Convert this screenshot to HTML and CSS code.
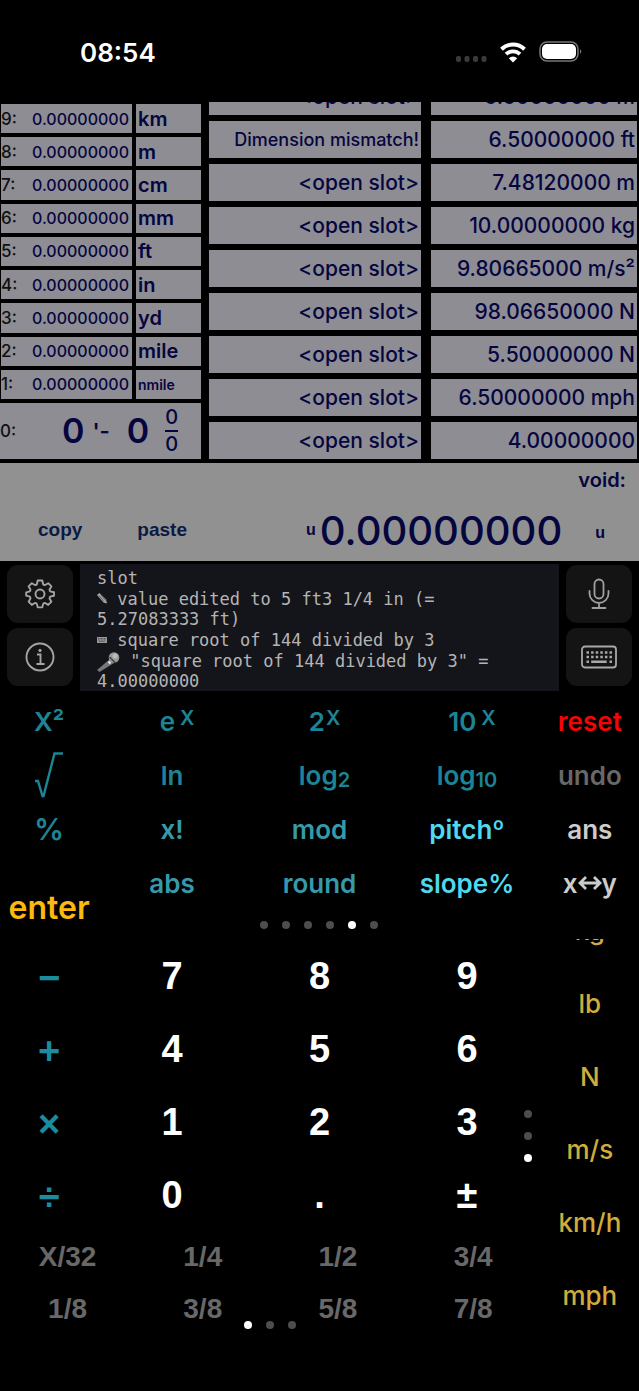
FILE: index.html
```html
<!DOCTYPE html>
<html lang="en">
<head>
<meta charset="utf-8">
<meta name="viewport" content="width=device-width, initial-scale=1">
<title>Calculator</title>
<link rel="stylesheet" href="styles.css">
</head>
<body>
<header class="status">
  <time class="clock">08:54</time>
  <div class="status-icons">
    <svg width="31" height="7" viewBox="0 0 31 7" fill="#3a3a3a"><rect x="0" y="0" width="5" height="6" rx="2"/><rect x="8.500" y="0" width="5" height="6" rx="2"/><rect x="17" y="0" width="5" height="6" rx="2"/><rect x="25.500" y="0" width="5" height="6" rx="2"/></svg>
    <svg class="wifi" width="28" height="22" viewBox="0 0 28 22"><path d="M2.500 8.200a16.500 16.500 0 0 1 23 0" fill="none" stroke="#fff" stroke-width="4"/><path d="M7 13.200a10 10 0 0 1 14 0" fill="none" stroke="#fff" stroke-width="3.800"/><path d="M14 21.500l-4.200-4.300a6 6 0 0 1 8.400 0z" fill="#fff"/></svg>
    <svg width="44" height="22" viewBox="0 0 44 22"><rect x="1" y="1" width="38" height="19" rx="7" fill="none" stroke="#777" stroke-width="1.500"/><rect x="3" y="3" width="34" height="15" rx="5" fill="#fff"/><path d="M41 8q2.600 2.500 0 5z" fill="#777"/></svg>
  </div>
</header>

<main>
<section class="panels">
  <div class="memory">
    <div class="mem-row"><div class="cell mem-value"><span class="mem-id">9:</span><span>0.00000000</span></div><div class="cell unit">km</div></div>
    <div class="mem-row"><div class="cell mem-value"><span class="mem-id">8:</span><span>0.00000000</span></div><div class="cell unit">m</div></div>
    <div class="mem-row"><div class="cell mem-value"><span class="mem-id">7:</span><span>0.00000000</span></div><div class="cell unit">cm</div></div>
    <div class="mem-row"><div class="cell mem-value"><span class="mem-id">6:</span><span>0.00000000</span></div><div class="cell unit">mm</div></div>
    <div class="mem-row"><div class="cell mem-value"><span class="mem-id">5:</span><span>0.00000000</span></div><div class="cell unit">ft</div></div>
    <div class="mem-row"><div class="cell mem-value"><span class="mem-id">4:</span><span>0.00000000</span></div><div class="cell unit">in</div></div>
    <div class="mem-row"><div class="cell mem-value"><span class="mem-id">3:</span><span>0.00000000</span></div><div class="cell unit">yd</div></div>
    <div class="mem-row"><div class="cell mem-value"><span class="mem-id">2:</span><span>0.00000000</span></div><div class="cell unit">mile</div></div>
    <div class="mem-row"><div class="cell mem-value"><span class="mem-id">1:</span><span>0.00000000</span></div><div class="cell unit unit-small">nmile</div></div>
    <div class="cell feet"><span class="mem-id">0:</span><span class="feet-num">0</span><span class="feet-mark">'-</span><span class="feet-num">0</span><span class="fraction"><span>0</span><span class="denominator">0</span></span></div>
  </div>
  <div class="slots">
    <table>
      <tbody>
      <tr><td>&lt;open slot&gt;</td><td>5.50000000 m</td></tr>
      <tr><td class="notice">Dimension mismatch!</td><td>6.50000000 ft</td></tr>
      <tr><td>&lt;open slot&gt;</td><td>7.48120000 m</td></tr>
      <tr><td>&lt;open slot&gt;</td><td>10.00000000 kg</td></tr>
      <tr><td>&lt;open slot&gt;</td><td>9.80665000 m/s²</td></tr>
      <tr><td>&lt;open slot&gt;</td><td>98.06650000 N</td></tr>
      <tr><td>&lt;open slot&gt;</td><td>5.50000000 N</td></tr>
      <tr><td>&lt;open slot&gt;</td><td>6.50000000 mph</td></tr>
      <tr><td>&lt;open slot&gt;</td><td>4.00000000</td></tr>
      </tbody>
    </table>
  </div>
</section>

<section class="readout">
  <div class="mode">void:</div>
  <div class="readout-line">
    <button type="button">copy</button>
    <button type="button">paste</button>
    <output class="result"><span class="result-u">u</span><span>0.00000000</span></output>
    <span class="result-u result-unit">u</span>
  </div>
</section>

<section class="history">
  <div class="tools">
    <button type="button" aria-label="Settings"><svg width="30" height="30" viewBox="0 0 30 30" fill="none" stroke="#a5a5a5" stroke-width="1.900" stroke-linejoin="round"><path d="M12.700 1.500h4.600l.7 3.200q.2.900 1 1.200.8.400 1.600-.1l2.600-1.600 3.200 3.200-1.600 2.600q-.5.800-.1 1.600.3.800 1.200 1l3.100.7v3.400l-3.100.7q-.9.200-1.200 1-.4.800.1 1.600l1.600 2.700-3.200 3.200-2.600-1.600q-.8-.5-1.600-.1-.8.300-1 1.200l-.7 3h-4.600l-.7-3q-.2-.9-1-1.200-.8-.4-1.600.1l-2.600 1.600-3.200-3.200 1.600-2.700q.5-.8.100-1.600-.3-.8-1.200-1L1.200 16.700v-3.400l2.900-.7q.9-.2 1.200-1 .4-.8-.1-1.600L3.600 7.400l3.200-3.200 2.600 1.600q.8.500 1.600.1.800-.3 1-1.200z"/><circle cx="15" cy="15" r="4.500"/></svg></button>
    <button type="button" aria-label="Information"><svg width="30" height="30" viewBox="0 0 30 30" fill="none" stroke="#a5a5a5" stroke-width="1.900"><circle cx="15" cy="15" r="13.500"/><path d="M12 12.500h3.500V22M11.500 22h8"/><circle cx="15" cy="8.500" r="1.200" fill="#a5a5a5" stroke-width="1"/></svg></button>
  </div>
  <div class="log">
    <p>slot</p>
    <p><svg class="glyph" width="10" height="12" viewBox="0 0 10 12"><path d="M0 2l2.500-2L9 6.500l1 4-3.500-1z" fill="#aaa"/><path d="M2 2.500l5 6M3.500 1.500l5 6" stroke="#333" stroke-width=".6"/></svg> value edited to 5 ft3 1/4 in (=<br>5.27083333 ft)</p>
    <p><svg class="glyph" width="10" height="12" viewBox="0 0 10 12"><path d="M0 3h10v6H0z" fill="#999"/><path d="M1 4.500h8M1 6h8M2 7.500h6" stroke="#333" stroke-width=".7" stroke-dasharray="1 .5"/></svg> square root of 144 divided by 3</p>
    <p><svg class="mic-glyph" width="23" height="20" viewBox="0 0 23 20"><path d="M13 7l4 4L2.500 20 0 18z" fill="#777"/><path d="M11.500 9.500l2 2" stroke="#eee" stroke-width="2"/><circle cx="17" cy="5.500" r="5.300" fill="#999"/><circle cx="18" cy="4" r="2.500" fill="#bbb"/><path d="M12.500 5l6 6" stroke="#444" stroke-width="1.500"/></svg> "square root of 144 divided by 3" =<br>4.00000000</p>
  </div>
  <div class="tools">
    <button type="button" aria-label="Dictate"><svg width="22" height="32" viewBox="0 0 22 32" fill="none" stroke="#a0a0a0" stroke-width="1.800" stroke-linecap="round"><rect x="6.500" y="1.500" width="9" height="19" rx="4.500"/><path d="M1.500 13v2.500a9.500 9.500 0 0 0 19 0V13M11 25v5M4.500 30h13"/></svg></button>
    <button type="button" aria-label="Keyboard"><svg width="36" height="24" viewBox="0 0 36 24" fill="none" stroke="#a8a8a8"><rect x="1" y="1.500" width="34" height="21" rx="3" stroke-width="1.800"/><path d="M5.500 7.500h26M5.500 12h26" stroke-width="2.500" stroke-dasharray="2.500 2.100"/><path d="M5.500 16.800h2.500M10.200 16.800h15.500M28.500 16.800h2.500" stroke-width="2.500"/></svg></button>
  </div>
</section>

<section class="functions">
  <button type="button">X²</button>
  <button type="button" class="raised">e<span class="power power-gap">X</span></button>
  <button type="button" class="raised">2<span class="power">X</span></button>
  <button type="button" class="raised">10<span class="power power-gap">X</span></button>
  <button type="button" class="reset">reset</button>

  <button type="button" aria-label="Square root"><svg width="30" height="46" viewBox="0 0 30 46" fill="none" stroke="#1d8496" stroke-width="2.400"><path d="M1 29h3l4.500 15h1L20.500 1.500H29"/></svg></button>
  <button type="button">ln</button>
  <button type="button" class="raised">log<span class="base">2</span></button>
  <button type="button">log<span class="base">10</span></button>
  <button type="button" class="undo">undo</button>

  <button type="button" class="percent">%</button>
  <button type="button" class="soft">x!</button>
  <button type="button" class="soft">mod</button>
  <button type="button" class="bright">pitchº</button>
  <button type="button" class="plain">ans</button>

  <button type="button" class="enter">enter</button>
  <button type="button" class="soft">abs</button>
  <button type="button" class="soft">round</button>
  <button type="button" class="bright">slope%</button>
  <button type="button" class="plain">x<svg width="24" height="18" viewBox="0 0 24 18" fill="none" stroke="#ccc" stroke-width="2.800"><path d="M2 9h20M8 3L2 9l6 6M16 3l6 6-6 6"/></svg>y</button>

  <div class="dots function-dots"><i></i><i></i><i></i><i></i><i class="on"></i><i></i></div>
</section>

<section class="pad">
  <div class="pad-main">
    <div class="numbers">
      <button type="button" class="op">−</button><button type="button">7</button><button type="button">8</button><button type="button">9</button>
      <button type="button" class="op">+</button><button type="button">4</button><button type="button">5</button><button type="button">6</button>
      <button type="button" class="op">×</button><button type="button">1</button><button type="button">2</button><button type="button">3</button>
      <button type="button" class="op">÷</button><button type="button">0</button><button type="button">.</button><button type="button">±</button>
    </div>
    <div class="fractions">
      <button type="button">X/32</button><button type="button">1/4</button><button type="button">1/2</button><button type="button">3/4</button>
      <button type="button">1/8</button><button type="button">3/8</button><button type="button">5/8</button><button type="button">7/8</button>
    </div>
    <div class="dots pad-dots"><i class="on"></i><i></i><i></i></div>
    <div class="dots side-dots"><i></i><i></i><i class="on"></i></div>
  </div>
  <div class="units">
    <button type="button">kg</button>
    <button type="button">lb</button>
    <button type="button">N</button>
    <button type="button">m/s</button>
    <button type="button">km/h</button>
    <button type="button">mph</button>
  </div>
</section>
</main>
</body>
</html>
```

FILE: styles.css
```css
* { box-sizing: border-box; }

body {
  margin: 0;
  background: #000;
  color: #05053f;
  font-family: Inter, "Liberation Sans", sans-serif;
  font-weight: 500;
}

button {
  margin: 0;
  padding: 0;
  border: 0;
  background: none;
  color: inherit;
  font: inherit;
  white-space: nowrap;
}

p { margin: 0; }

.status {
  display: flex;
  align-items: center;
  justify-content: space-between;
  height: 102px;
  padding: 2px 56px 0 80px;
}

.clock {
  color: #fff;
  font-size: 26px;
  font-weight: 600;
}

.status-icons {
  display: flex;
  align-items: center;
  gap: 12px;
}

.status-icons svg:first-child { margin-top: 14px; }

/* Memory and slot panels */
.panels {
  display: grid;
  grid-template-columns: 201fr 430fr;
  gap: 8px;
  height: 357px;
  overflow: hidden;
}

.memory {
  display: flex;
  flex-direction: column;
  gap: 4px;
  min-height: 0;
  padding-top: 2px;
}

.mem-row {
  display: grid;
  flex: 1;
  grid-template-columns: 131fr 65fr;
  gap: 4px;
  padding-left: 1px;
}

.cell, .slots td {
  display: flex;
  align-items: center;
  background: #8e8d94;
}

.mem-value {
  justify-content: space-between;
  padding-right: 3px;
  font-size: 16px;
}

.mem-id {
  color: #111;
  font-size: 17px;
}

.unit {
  padding-left: 2px;
  font-size: 20px;
  font-weight: 600;
}

.unit-small { font-size: 14px; }

.feet { height: 56px; }

.feet-num {
  font-size: 34px;
  font-weight: 600;
}

.feet-mark {
  margin: 0 17px 0 8px;
  font-size: 22px;
  font-weight: 600;
}

.feet .mem-id { width: 62px; }

.fraction {
  display: flex;
  flex-direction: column;
  margin-left: 16px;
  font-size: 20px;
  line-height: 25px;
}

.denominator { border-top: 2px solid #05053f; }

.slots {
  display: flex;
  flex-direction: column;
  justify-content: flex-end;
  contain: size;
  padding-right: 2px;
}

.slots table, .slots tbody {
  display: flex;
  flex-direction: column;
  gap: 6px;
}

.slots tr {
  display: grid;
  grid-template-columns: 212fr 206fr;
  gap: 10px;
}

.slots td {
  justify-content: flex-end;
  height: 37px;
  padding: 0 2px;
  font-size: 21px;
  white-space: nowrap;
}

.slots .notice { font-size: 18px; }

/* Current result */
.readout {
  margin-top: 4px;
  padding: 5px 34px 1px 38px;
  background: #919191;
}

.mode {
  margin-right: -21px;
  font-size: 20px;
  font-weight: 600;
  line-height: 24px;
  text-align: right;
}

.readout-line {
  display: flex;
  align-items: center;
  height: 60px;
  margin-top: 8px;
}

.readout-line button {
  margin-right: 55px;
  color: #0b1a45;
  font: bold 19px "Liberation Sans", sans-serif;
}

.result {
  display: flex;
  align-items: center;
  gap: 4px;
  margin: 0 33px 0 auto;
  font-size: 40px;
}

.result-u { font: bold 16px "Liberation Sans", sans-serif; }
.result-unit { padding-top: 6px; }

/* History log with tool buttons */
.history {
  display: grid;
  grid-template-columns: 66px 1fr 66px;
  gap: 7px;
  padding: 3px 7px;
}

.tools {
  display: grid;
  grid-template-rows: 58px 58px;
  gap: 5px;
  padding-top: 1px;
}

.tools button {
  display: grid;
  place-items: center;
  border-radius: 11px;
  background: #141414;
}

.log {
  display: grid;
  align-content: start;
  gap: 1px;
  padding: 4px 17px 0;
  background: #14151a;
  color: #b4b4b4;
  font: 17px/20px "DejaVu Sans Mono", monospace;
  white-space: nowrap;
}

.mic-glyph {
  margin: -4px 0;
  vertical-align: -1px;
}

/* Function keys */
.functions {
  display: grid;
  grid-template-columns: 2fr 3fr 3fr 3fr 2fr;
  grid-template-rows: repeat(4, 54px) 29px;
  color: #1d8496;
  font-size: 26px;
  font-weight: 600;
}

.functions button, .units button {
  display: flex;
  align-items: center;
  justify-content: center;
}

.functions .raised { padding-left: 10px; }

.power {
  margin: 0 0 7px 1px;
  font-size: 20px;
}

.power-gap { margin-left: 5px; }

.base {
  margin-top: 9px;
  font-size: 20px;
}

.functions .reset { color: #f30505; }
.functions .undo { color: #686868; }
.functions .percent { font-size: 30px; }
.functions .soft { color: #369aaa; }
.functions .bright { color: #4fd8ef; }
.functions .plain { color: #ccc; }

.functions .enter {
  grid-row: 4 / 6;
  padding-top: 20px;
  color: #fcb90f;
  font-size: 32px;
}

.dots {
  display: flex;
  align-items: center;
  justify-content: center;
  gap: 14px;
}

.dots i {
  width: 8px;
  height: 8px;
  border-radius: 50%;
  background: #4d4d4d;
}

.dots .on { background: #fff; }

.function-dots { grid-column: 2 / 5; }

/* Number pad */
.pad {
  display: grid;
  grid-template-columns: 11fr 2fr;
}

.pad-main { position: relative; }

.numbers {
  display: grid;
  grid-template-columns: 2fr 3fr 3fr 3fr;
  grid-auto-rows: 73px;
  color: #fff;
  font: bold 38px "Liberation Sans", sans-serif;
}

.numbers button { padding-top: 2px; }

.numbers .op {
  padding-top: 6px;
  color: #1b8c9f;
}

.fractions {
  display: grid;
  grid-template-columns: repeat(4, 1fr);
  grid-auto-rows: 52px;
  color: #686868;
  font: bold 28px "Liberation Sans", sans-serif;
}

.pad-dots {
  position: absolute;
  right: 0;
  bottom: 6px;
  left: 0;
}

.side-dots {
  position: absolute;
  top: 171px;
  right: 9px;
  flex-direction: column;
}

.units {
  display: flex;
  flex-direction: column;
  justify-content: flex-end;
  contain: size;
  overflow: hidden;
  padding-bottom: 3px;
  color: #d0ac3c;
  font-size: 26px;
}

.units button { flex: 0 0 73px; }
```
